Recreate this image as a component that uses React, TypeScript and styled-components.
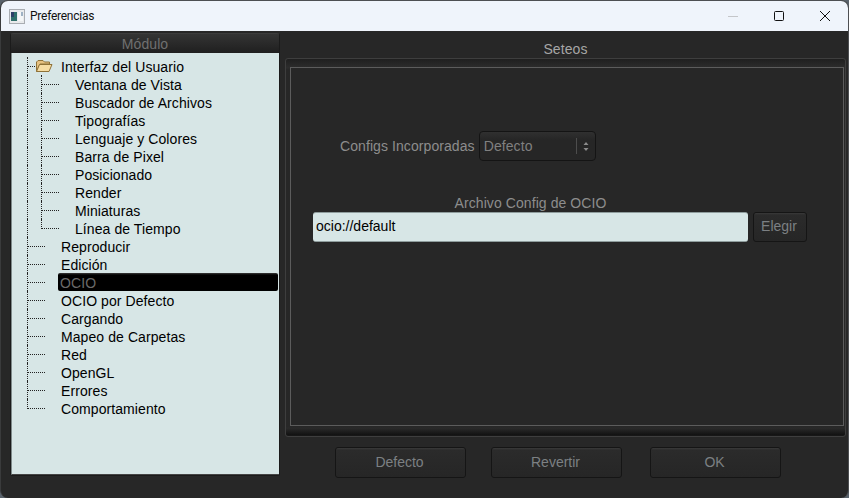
import React from "react";
import styled, { createGlobalStyle } from "styled-components";

const Global = createGlobalStyle`
  html, body { margin: 0; padding: 0; height: 498px; width: 849px; overflow: hidden; background: #59626b; }
  #root { height: 498px; width: 849px; }
  * { box-sizing: border-box; }
`;

const Window = styled.div`
  width: 849px;
  height: 498px;
  display: flex;
  flex-direction: column;
  background: #272727;
  border-radius: 8px;
  overflow: hidden;
  font-family: "Liberation Sans", Arial, sans-serif;
  font-size: 14px;
  letter-spacing: 0.08px;
  border: 1px solid #4d4f52;
  border-bottom: none;
  border-left-color: #3a3b3c;
`;

const TitleBar = styled.div`
  height: 30px;
  flex: none;
  display: flex;
  align-items: center;
  background: #eff4fb;
  padding-left: 8px;
`;

const TitleIcon = styled.svg`
  width: 16px;
  height: 15px;
  flex: none;
  margin-right: 5px;
`;

const TitleText = styled.span`
  font-family: Roboto, "Noto Sans", sans-serif;
  font-size: 12px;
  letter-spacing: -0.25px;
  color: #111;
  flex: 1;
`;

const WinButton = styled.button`
  width: 46px;
  height: 30px;
  border: 0;
  padding: 0;
  background: transparent;
  display: flex;
  align-items: center;
  justify-content: center;
`;

const Body = styled.div`
  flex: 1;
  min-height: 0;
  display: flex;
  padding: 2px 2px 0 9px;
`;

const LeftPanel = styled.div`
  width: 270px;
  height: 443px;
  flex: none;
  display: flex;
  flex-direction: column;
  border: 1px solid #1b1b1b;
  border-top-color: #3c3c3c;
  border-radius: 3px;
  background: #1e1e1e;
`;

const ModuleHeader = styled.div`
  height: 19px;
  flex: none;
  text-align: center;
  line-height: 21px;
  color: #707070;
  background: linear-gradient(#343434, #1f1f1f);
`;

const Tree = styled.div`
  flex: 1;
  min-height: 0;
  background: #d7e6e6;
  border-left: 1px solid #7f8a8a;
  border-bottom: 1px solid #454545;
  padding: 4px 0 0 15px;
  display: flex;
  flex-direction: column;
`;

const Row = styled.div`
  height: 18px;
  flex: none;
  display: flex;
  color: #000;
  line-height: 20px;
  white-space: nowrap;
`;

const Guide = styled.span<{ $width: number; $branch?: boolean; $end?: boolean }>`
  position: relative;
  flex: none;
  width: ${(p) => p.$width}px;
  height: 18px;
  &::before {
    content: "";
    position: absolute;
    left: 0;
    top: 0;
    height: ${(p) => (p.$end ? "10px" : "18px")};
    border-left: 1px dotted #222;
  }
  &::after {
    content: ${(p) => (p.$branch ? '""' : "none")};
    position: absolute;
    left: 1px;
    top: 9px;
    width: 17px;
    border-top: 1px dotted #222;
  }
`;

const FolderIcon = styled.svg`
  position: absolute;
  left: 8px;
  top: 2px;
  width: 18px;
  height: 14px;
  z-index: 1;
`;

const Label = styled.span<{ $selected?: boolean }>`
  flex: ${(p) => (p.$selected ? "1" : "none")};
  margin-left: ${(p) => (p.$selected ? "-3px" : "0")};
  margin-right: ${(p) => (p.$selected ? "1px" : "0")};
  padding-left: ${(p) => (p.$selected ? "2px" : "0")};
  height: 18px;
  color: ${(p) => (p.$selected ? "#6a6a6a" : "#000")};
  background: ${(p) => (p.$selected ? "linear-gradient(#3a3a3a 0, #000 2px)" : "transparent")};
  border-radius: ${(p) => (p.$selected ? "2px" : "0")};
`;

const RightPanel = styled.div`
  flex: 1;
  min-width: 0;
  margin-left: 5px;
  display: flex;
  flex-direction: column;
`;

const SettingsTitle = styled.div`
  height: 25px;
  flex: none;
  text-align: center;
  line-height: 32px;
  color: #a6a6a6;
`;

const GroupFrame = styled.div`
  height: 379px;
  flex: none;
  display: flex;
  border: 1px solid #3e3e3e;
  border-radius: 3px;
  padding: 8px 1px 0 4px;
  background: linear-gradient(#1f1f1f, #2d2d2d 9px, #272727 10px, #272727 368px, #2a2a2a 369px, #121212 376px, #1c1c1c);
`;

const GroupInner = styled.div`
  width: 554px;
  height: 359px;
  flex: none;
  border: 1px solid #5c5c5c;
  background: #272727;
  display: flex;
  flex-direction: column;
`;

const ConfigRow = styled.div`
  display: flex;
  align-items: center;
  gap: 4px;
  margin: 63px 0 0 49px;
  height: 30px;
`;

const FieldLabel = styled.span`
  color: #8d8d8d;
`;

const Combo = styled.div`
  width: 117px;
  height: 30px;
  flex: none;
  display: flex;
  align-items: center;
  padding-left: 4px;
  border: 1px solid #141414;
  border-radius: 4px;
  background: linear-gradient(#303030, #262626 8px);
  color: #808080;
`;

const ComboText = styled.span`
  flex: 1;
`;

const ComboArrows = styled.span`
  flex: none;
  width: 19px;
  height: 16px;
  border-left: 1px solid #4d4d4d;
  display: flex;
  align-items: center;
  justify-content: center;
`;

const FileTitle = styled.div`
  margin-top: 33px;
  width: 435px;
  margin-left: 22px;
  height: 18px;
  line-height: 18px;
  text-align: center;
  color: #868686;
`;

const FileRow = styled.div`
  display: flex;
  gap: 5px;
  margin-left: 22px;
`;

const PathInput = styled.input`
  width: 435px;
  height: 30px;
  flex: none;
  border: 0;
  border-top: 1px solid #8f9d9d;
  border-bottom: 1px solid #8f9d9d;
  border-radius: 3px;
  background: #d7e6e6;
  padding: 0 3px 2px;
  color: #000;
  font: 14px "Liberation Sans", Arial, sans-serif;
  outline: none;
`;

const DarkButton = styled.button<{ $width: number; $gap?: number }>`
  width: ${(p) => p.$width}px;
  margin-left: ${(p) => p.$gap ?? 0}px;
  height: 30px;
  flex: none;
  border: 1px solid #151515;
  border-radius: 3px;
  background: linear-gradient(#3a3a3a 0, #2b2b2b 2px, #262626 100%);
  color: #7c8083;
  font: 14px "Liberation Sans", Arial, sans-serif;
  padding: 0 2px 2px 0;
`;

const Footer = styled.div`
  display: flex;
  margin: 10px 0 0 50px;
`;

const FooterButton = styled(DarkButton)`
  height: 31px;
`;

const children = ["Ventana de Vista", "Buscador de Archivos", "Tipografías", "Lenguaje y Colores", "Barra de Pixel", "Posicionado", "Render", "Miniaturas", "Línea de Tiempo"];
const topLevel = ["Reproducir", "Edición", "OCIO", "OCIO por Defecto", "Cargando", "Mapeo de Carpetas", "Red", "OpenGL", "Errores", "Comportamiento"];

export default function App() {
  return (
    <Window>
      <Global />
      <TitleBar>
        <TitleIcon viewBox="0 0 16 15">
          <rect x="0.5" y="0.5" width="15" height="14" fill="#e8eaec" stroke="#a9adb2" />
          <rect x="2" y="3" width="6" height="9" fill="#2f6f6a" />
          <rect x="2" y="3" width="3" height="5" fill="#2d3f66" />
          <rect x="9" y="3" width="5" height="9" fill="#f4f6f7" />
          <rect x="12" y="3" width="2" height="4" fill="#9fb2c4" />
        </TitleIcon>
        <TitleText>Preferencias</TitleText>
        <WinButton aria-label="Minimizar">
          <svg width="10" height="10" viewBox="0 0 10 10"><path d="M0 5.5H10" stroke="#c4c6c9" /></svg>
        </WinButton>
        <WinButton aria-label="Maximizar">
          <svg width="10" height="10" viewBox="0 0 10 10"><rect x="0.5" y="0.5" width="9" height="9" rx="1" fill="none" stroke="#111" /></svg>
        </WinButton>
        <WinButton aria-label="Cerrar">
          <svg width="10" height="10" viewBox="0 0 10 10"><path d="M0 0L10 10M10 0L0 10" stroke="#111" /></svg>
        </WinButton>
      </TitleBar>
      <Body>
        <LeftPanel>
          <ModuleHeader>Módulo</ModuleHeader>
          <Tree>
            <Row>
              <Guide $width={34} $branch>
                <FolderIcon viewBox="0 0 18 14">
                  <path d="M1.5 12.5V3L3 1.5H8L9.5 3H14.5V5H5L1.5 12.5Z" fill="#e6c180" stroke="#8f7238" />
                  <path d="M1.5 12.5L4.5 5.5H17L14 12.5H1.5Z" fill="#f6dca2" stroke="#8f7238" />
                </FolderIcon>
              </Guide>
              <Label>Interfaz del Usuario</Label>
            </Row>
            {children.map((c, i) => (
              <Row key={c}>
                <Guide $width={14} />
                <Guide $width={34} $branch $end={i === children.length - 1} />
                <Label>{c}</Label>
              </Row>
            ))}
            {topLevel.map((t, i) => (
              <Row key={t}>
                <Guide $width={34} $branch $end={i === topLevel.length - 1} />
                <Label $selected={t === "OCIO"}>{t}</Label>
              </Row>
            ))}
          </Tree>
        </LeftPanel>
        <RightPanel>
          <SettingsTitle>Seteos</SettingsTitle>
          <GroupFrame>
            <GroupInner>
              <ConfigRow>
                <FieldLabel>Configs Incorporadas</FieldLabel>
                <Combo>
                  <ComboText>Defecto</ComboText>
                  <ComboArrows>
                    <svg width="6" height="11" viewBox="0 0 6 11">
                      <path d="M3 1L5.5 4H0.5Z M3 10L0.5 7H5.5Z" fill="#8a8a8a" />
                    </svg>
                  </ComboArrows>
                </Combo>
              </ConfigRow>
              <FileTitle><FieldLabel>Archivo Config de OCIO</FieldLabel></FileTitle>
              <FileRow>
                <PathInput readOnly value="ocio://default" />
                <DarkButton $width={54}>Elegir</DarkButton>
              </FileRow>
            </GroupInner>
          </GroupFrame>
          <Footer>
            <FooterButton $width={131}>Defecto</FooterButton>
            <FooterButton $width={131} $gap={25}>Revertir</FooterButton>
            <FooterButton $width={131} $gap={28}>OK</FooterButton>
          </Footer>
        </RightPanel>
      </Body>
    </Window>
  );
}
